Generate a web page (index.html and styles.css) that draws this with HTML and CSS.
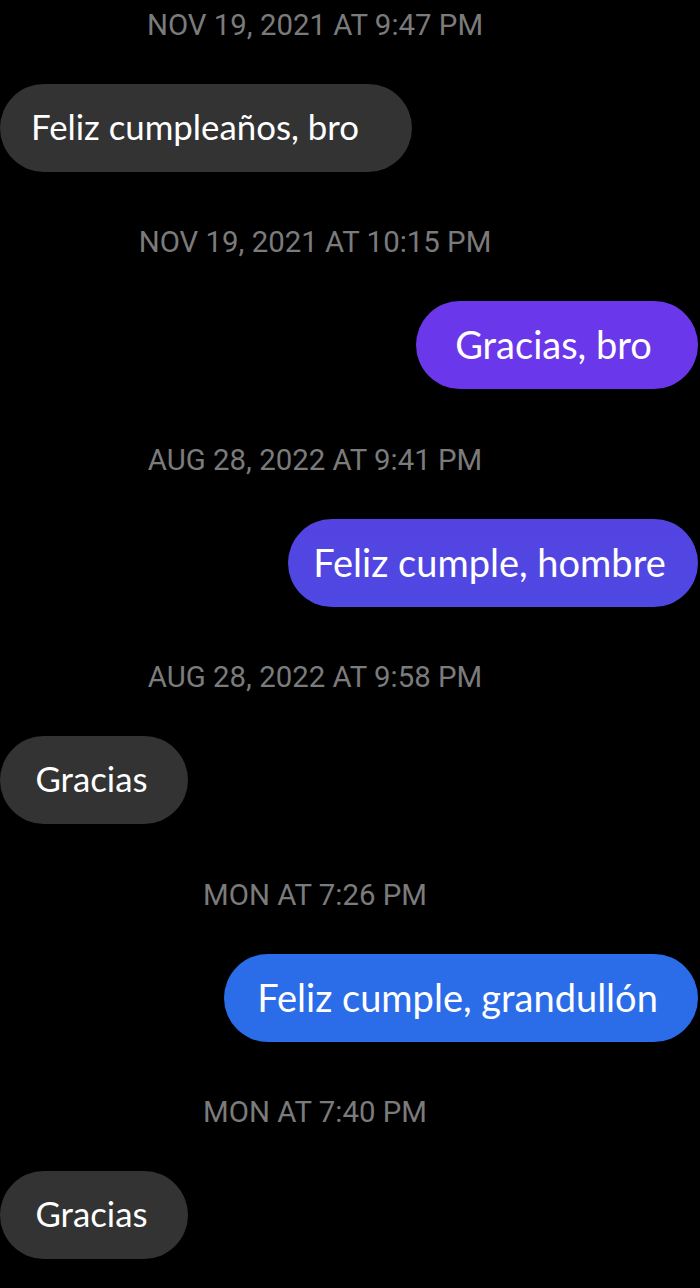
FILE: index.html
```html
<!DOCTYPE html>
<html lang="es">
<head>
<meta charset="utf-8">
<title>Mensajes</title>
<link rel="stylesheet" href="styles.css">
</head>
<body>
<main class="thread">
  <section class="group">
    <div class="stamp">NOV 19, 2021 AT 9:47 PM</div>
    <div class="row in"><div class="bubble gray b1">Feliz cumpleaños, bro</div></div>
  </section>
  <section class="group">
    <div class="stamp">NOV 19, 2021 AT 10:15 PM</div>
    <div class="row out"><div class="bubble violet b2">Gracias, bro</div></div>
  </section>
  <section class="group">
    <div class="stamp">AUG 28, 2022 AT 9:41 PM</div>
    <div class="row out"><div class="bubble indigo b3">Feliz cumple, hombre</div></div>
  </section>
  <section class="group">
    <div class="stamp">AUG 28, 2022 AT 9:58 PM</div>
    <div class="row in"><div class="bubble gray b4">Gracias</div></div>
  </section>
  <section class="group">
    <div class="stamp">MON AT 7:26 PM</div>
    <div class="row out"><div class="bubble blue b5">Feliz cumple, grandullón</div></div>
  </section>
  <section class="group">
    <div class="stamp">MON AT 7:40 PM</div>
    <div class="row in"><div class="bubble gray b6">Gracias</div></div>
  </section>
</main>
</body>
</html>
```
FILE: styles.css
```css
html, body {
  margin: 0;
  padding: 0;
  background: #000;
}
body {
  width: 700px;
  height: 1288px;
  overflow: hidden;
}
.thread {
  display: flex;
  flex-direction: column;
}
.group {
  display: flex;
  flex-direction: column;
  height: 217.4px;
}
.stamp {
  height: 50px;
  line-height: 50px;
  padding-right: 70px;
  text-align: center;
  font-family: Roboto, "Liberation Sans", sans-serif;
  font-size: 29.4px;
  color: #7b7b7b;
  margin-bottom: 34px;
}
.row {
  display: flex;
}
.row.in { justify-content: flex-start; }
.row.out { justify-content: flex-end; padding-right: 2px; }
.bubble {
  height: 88px;
  line-height: 86px;
  border-radius: 44px;
  box-sizing: border-box;
  font-family: Lato, "Noto Sans", sans-serif;
  font-size: 34.8px;
  color: #fff;
  white-space: nowrap;
  text-align: center;
  padding-right: 5px;
}
.row.out .bubble {
  font-size: 38px;
  padding-right: 7px;
}
.gray { background: #333333; }
.violet { background: #6a38ea; }
.indigo { background: linear-gradient(180deg, #5444e2, #4f48e2); }
.blue { background: #2b6ce9; }
.b1 { width: 412px; text-align: left; padding-left: 31px; }
.b2 { width: 282px; }
.b3 { width: 410px; }
.b4 { width: 188px; }
.b5 { width: 474px; }
.b6 { width: 188px; }
```
